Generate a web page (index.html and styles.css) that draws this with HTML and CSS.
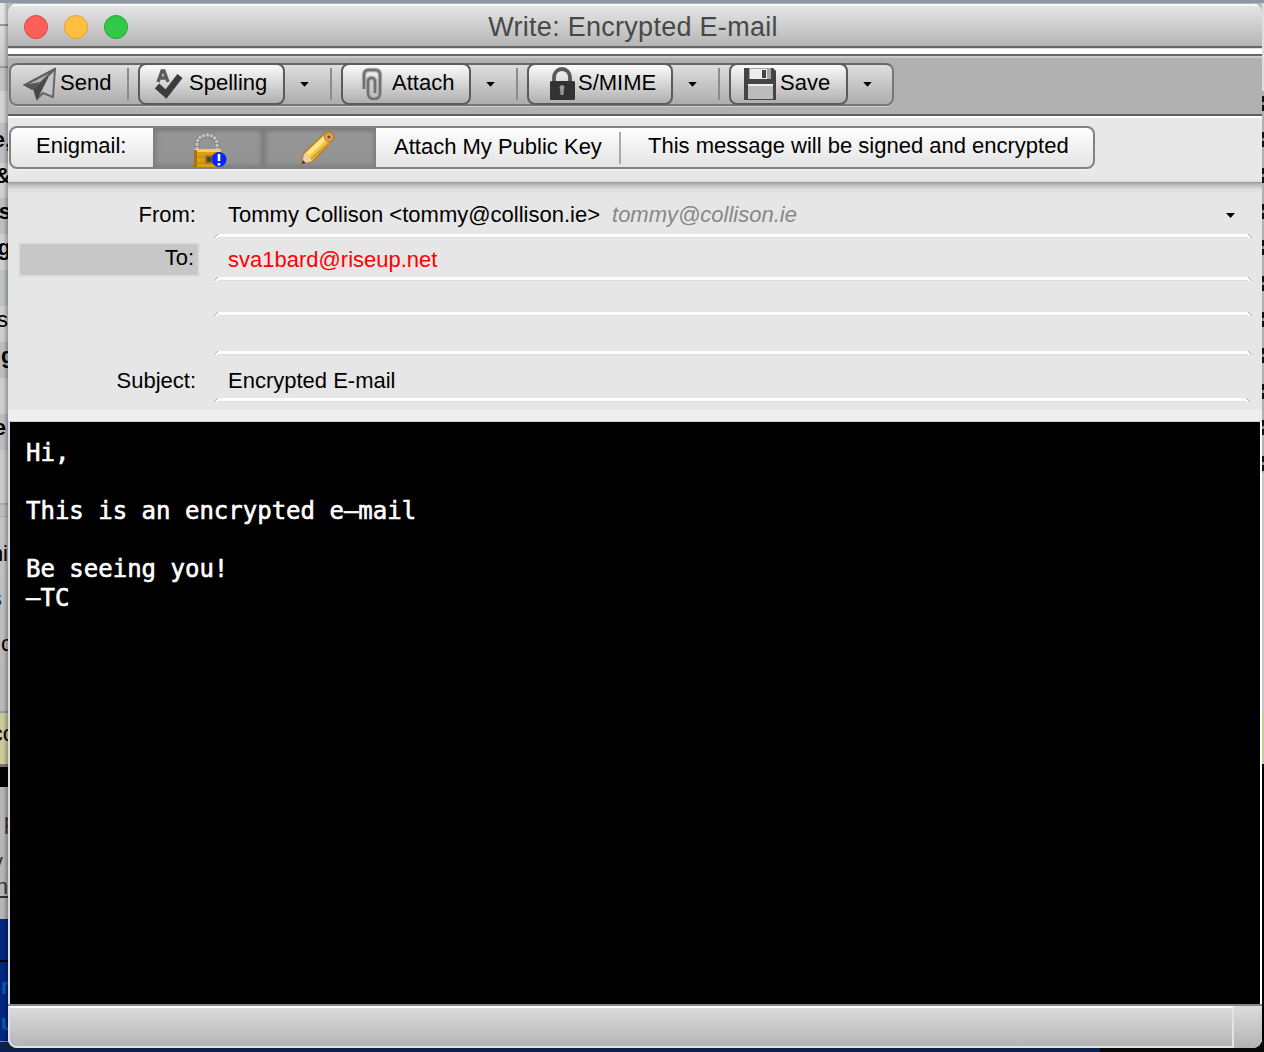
FILE: index.html
```html
<!DOCTYPE html>
<html lang="en">
<head>
<meta charset="utf-8">
<title>Write: Encrypted E-mail</title>
<link rel="stylesheet" href="styles.css">
</head>
<body>
<div class="desktop">
  <div class="behind-left" aria-hidden="true">
    <span class="b" style="top:127px">e,</span>
    <span class="b" style="top:163px">&amp;</span>
    <span class="b" style="top:199px">s</span>
    <span class="b" style="top:235px">g</span>
    <span style="top:307px">s</span>
    <span class="b cut" style="top:343px">g</span>
    <span class="b" style="top:415px">e</span>
    <span style="top:541px">ni</span>
    <span class="link" style="top:586px">s</span>
    <span class="cut" style="top:631px">c</span>
    <span class="co" style="top:721px">co</span>
    <span class="dim p" style="top:809px">p</span>
    <span class="dim y" style="top:849px">y</span>
    <span class="dim" style="top:874px"><u>n</u></span>
    <span class="blue cut" style="top:974px">r</span>
    <span class="blue cut" style="top:1010px">u</span>
  </div>
  <div class="behind-right"></div>
  <div class="behind-bottom"></div>

  <main class="window">
    <header class="titlebar">
      <div class="lights"><i class="red"></i><i class="yellow"></i><i class="green"></i></div>
      <h1>Write: Encrypted E-mail</h1>
    </header>

    <nav class="toolbar">
      <div class="group">
        <div class="send">
          <svg width="34" height="34" viewBox="0 0 34 34"><path d="M2 18 32 2 30 30 20 26 14 32 11 22Z" fill="#c4c4c4" stroke="#666" stroke-width="2"/><path d="M2 18 32 2 11 22Z" fill="#b5b5b5" stroke="#606060" stroke-width="2"/><path d="M1 18 17 15 9 23Z" fill="#555"/><path d="M11 22 25 10 18 24 14 32Z" fill="#484848" stroke="#484848"/></svg>
          <span>Send</span>
        </div>
        <i class="sep"></i>
        <button class="btn spelling">
          <svg width="30" height="34" viewBox="0 0 30 34"><path d="M4 15 8 4h2l4 11M6 11h6" fill="none" stroke="#5c5c5c" stroke-width="3.4"/><path d="M3 19 12 27 26 9" fill="none" stroke="#3c3c3c" stroke-width="6.5"/></svg>
          <span>Spelling</span>
        </button>
        <div class="more"><i class="caret"></i></div>
        <i class="sep"></i>
        <button class="btn attach">
          <svg width="24" height="34" viewBox="0 0 24 34"><path d="M3 22V8Q3 3 8 3h6q5 0 5 5v18q0 6-6 6t-6-6V15q0-4 3.500-4t3.500 4v11" fill="none" stroke="#aaa" stroke-width="4.4"/><path d="M3 22V8Q3 3 8 3h6q5 0 5 5v18q0 6-6 6t-6-6V15q0-4 3.500-4t3.500 4v11" fill="none" stroke="#707070" stroke-width="2.2"/></svg>
          <span>Attach</span>
        </button>
        <div class="more"><i class="caret"></i></div>
        <i class="sep"></i>
        <button class="btn smime">
          <svg width="28" height="34" viewBox="0 0 28 34"><path d="M6 17V11C6 -1 22 -1 22 11v6" fill="none" stroke="#5a5a5a" stroke-width="3.8"/><rect x="2" y="14" width="25" height="19" rx="1.5" fill="#333"/><path d="M12 22a2.500 2.500 0 1 1 4 0l-.6 6h-2.800Z" fill="#999"/></svg>
          <span>S/MIME</span>
        </button>
        <div class="more"><i class="caret"></i></div>
        <i class="sep"></i>
        <button class="btn save">
          <svg width="34" height="34" viewBox="0 0 34 34"><path d="M1 1h29l3 3v29H1Z" fill="#444"/><path d="M6 1h22v11H6Z" fill="#a5a5a5"/><path d="M7 2h17v10H7Z" fill="#eee"/><path d="M19 3h4v8h-4Z" fill="#444"/><path d="M5 17h25v15H5Z" fill="#bcbcbc"/><path d="M5 17h25v2H5Z" fill="#eee"/></svg>
          <span>Save</span>
        </button>
        <div class="more"><i class="caret"></i></div>
      </div>
    </nav>

    <nav class="enigbar">
      <div class="group light">
        <div class="label">Enigmail:</div>
        <button class="pressed lock">
          <svg width="40" height="38" viewBox="0 0 40 38"><path d="M9 20V14C9 2 29 2 29 14v6" fill="none" stroke="#858585" stroke-width="5"/><path d="M9 20V14C9 2 29 2 29 14v6" fill="none" stroke="#c4c4c4" stroke-width="3" stroke-dasharray="3 1"/><path d="M6 19h27v19H6Z" fill="#d9a014"/><path d="M6 19h27v3H6Z" fill="#f5cf4f"/><path d="M6 27h27M6 33h27" stroke="#b98312" stroke-width="1"/><path d="M6 20h3v18H6Z" fill="#a9740b"/><path d="M17 25h8v9h-8Z" fill="#9b762a"/><path d="M19 27h4v5h-4Z" fill="#554019"/><circle cx="31" cy="29.500" r="7.500" fill="#0a24ff"/><path d="M31 24v7M31 33v2.500" stroke="#fff" stroke-width="2.600"/></svg>
        </button>
        <button class="pressed pencil">
          <svg width="36" height="36" viewBox="0 0 36 36"><path d="M2 34 4 23 24 4Q28 0 32 3Q36 7 32 11L13 31Z" fill="#f2c744" stroke="#b67a1e" stroke-width="1.2"/><path d="M6 23 25 5l3 3L9 26Z" fill="#ffe688"/><path d="M11 29 30 12" stroke="#d79a28" stroke-width="2"/><path d="M2 34 4 24 8 25 12 31Z" fill="#efd0a0"/><path d="M2 34 2.500 30 6 33Z" fill="#503010"/><circle cx="29" cy="7" r="4.600" fill="#dda260" stroke="#b77835"/><circle cx="29" cy="7" r="1.600" fill="#70502c"/></svg>
        </button>
        <div class="key">Attach My Public Key</div>
        <i class="sep"></i>
        <div class="status">This message will be signed and encrypted</div>
      </div>
    </nav>

    <section class="fields">
      <div class="row from"><label>From:</label><div class="field"><span>Tommy Collison &lt;tommy@collison.ie&gt;</span><em>tommy@collison.ie</em><i class="caret"></i></div></div>
      <div class="row to"><label>To:</label><div class="field"><span>sva1bard@riseup.net</span></div></div>
      <div class="row empty1"><label></label><div class="field"></div></div>
      <div class="row empty2"><label></label><div class="field"></div></div>
      <div class="row subject"><label>Subject:</label><div class="field"><span>Encrypted E-mail</span></div></div>
    </section>
    <div class="splitter"></div>

    <pre class="editor">Hi,

This is an encrypted e–mail

Be seeing you!
—TC</pre>

    <footer class="statusbar"><div class="panel"></div><div class="grip"></div></footer>
  </main>
</div>
</body>
</html>
```
FILE: styles.css
```css
* { box-sizing: border-box; }
body { margin: 0; background: #000; font: 22px/26px "Liberation Sans", Arial, sans-serif; color: #000; }
i, em { display: block; }
.desktop { position: relative; width: 1264px; height: 1052px; overflow: hidden; background: linear-gradient(#8f97a4 0 3px, #b8b8b8 3px); }

/* Windows showing behind the composer */
.behind-left {
  position: absolute; left: 0; top: 3px; width: 8px; height: 1049px; overflow: hidden;
  background: linear-gradient(#e6e6e6 0, #e0e0e0 21px, #999 21px 23px, #dcdcdc 23px, #c5c5c5 63px, #999 63px 65px, #c2c2c2 65px 88px, #d2d2d2 88px 120px, #bdbfc2 120px 160px, #d0d0d0 160px 195px, #bcbec1 195px 231px, #cfcfcf 231px 267px, #bec0c3 267px 303px, #cecece 303px 339px, #bbbdc1 339px 375px, #cecece 375px 411px, #bbbdc1 411px 447px, #c9c9c9 447px 500px, #aaa 500px 502px, #bdbdbd 502px 513px, #aaa 513px 514px, #c3c3c3 514px, #b7b7b7 708px, #999 708px 710px, #cbca97 710px 761px, #777 761px 764px, #000 764px 784px, #b5b5b5 784px 916px, #00277d 916px 957px, #000 957px 959px, #00277d 959px 1038px, #888 1038px 1040px, #062152 1040px);
}
.behind-left span { position: absolute; right: 0; margin-top: -3px; white-space: nowrap; }
.behind-left .cut { right: auto; left: 1px; }
.behind-left .co { right: -7px; }
.behind-left .p { right: auto; left: 4px; }
.behind-left .y { right: 5px; }
.behind-left .b { font-weight: bold; }
.behind-left .b:first-child { right: -3px; }
.behind-left .b:nth-child(2), .behind-left .b:nth-child(3), .behind-left .b:nth-child(4) { right: -3px; }
.behind-left .b:nth-child(7) { right: 2px; }
.behind-left .link { color: #0c3591; right: 6px; }
.behind-left .dim { color: #333; }
.behind-left .blue { color: #0759b7; font-weight: bold; }
.behind-left::after { content: ""; position: absolute; inset: 0; background: linear-gradient(90deg, transparent 40%, rgba(0,0,0,.28)); }
.behind-right {
  position: absolute; left: 1262px; top: 3px; width: 2px; height: 1049px;
  background: linear-gradient(#ddd 0 88px, transparent 88px 470px, #c4c4c4 470px 710px, #cbca97 710px 761px, #000 761px), repeating-linear-gradient(#aeb0b4 0 21px, #111 21px 27px, #a98761 27px 30px, #111 30px 36px);
}
.behind-bottom { position: absolute; left: 0; top: 1042px; width: 1264px; height: 10px; background: linear-gradient(90deg, #0a214c 0 1100px, #080808 1100px); }

/* Composer window */
.window { position: absolute; left: 8px; top: 3px; width: 1254px; height: 1045px; display: flex; flex-direction: column; border-radius: 10px 10px 9px 9px; overflow: hidden; background: #e7e7e7; }
.titlebar { height: 51px; flex: none; display: grid; grid-template-columns: 1fr auto 1fr; align-items: center; padding: 0 0 4px 16px; border-top: 1px solid #b5b5b5; background: linear-gradient(#f7f7f7 0 2px, #e5e5e5 2px, #b5b5b5 42px, #666 42px 44px, #ddd 44px 45px, #fff 45px); }
.titlebar h1 { margin: 0 0 0 -20px; font-size: 27px; line-height: 30px; font-weight: 400; letter-spacing: .28px; color: #484848; }
.lights { display: flex; gap: 16px; margin-top: -1px; }
.lights i { width: 24px; height: 24px; border-radius: 50%; border: 1px solid; }
.lights .red { background: #ff5f5a; border-color: #e1453f; }
.lights .yellow { background: #ffbf3f; border-color: #dfa032; }
.lights .green { background: #34c849; border-color: #21a532; }

.toolbar { height: 64px; flex: none; padding: 9px 0 0 1px; background: linear-gradient(#666 0 2px, #ccc 2px 4px, #b1b1b1 4px 60px, #5f5f5f 60px 62px, #fff 62px); }
.group { display: flex; align-items: center; width: 884.5px; height: 42.5px; border: 2px solid #777; border-color: #686868 #777 #777; border-radius: 8px; background: linear-gradient(#dedede, #adadad); box-shadow: 0 1px 0 #d0d0d0; }
.sep { width: 2px; height: 32px; flex: none; background: #8b8b8b; }
.send { width: 116px; flex: none; display: flex; align-items: center; padding-left: 12px; }
.send span { margin: -3px 0 0 3px; }
.btn { height: 42px; flex: none; display: flex; align-items: center; margin: 0 0 0 9px; border: 2px solid #5b5b5b; border-radius: 8px; background: linear-gradient(#fbfbfb, #b0b0b0); padding: 0 0 0 14px; font: inherit; color: #000; }
.btn svg, .send svg { flex: none; }
.btn span { margin-top: -3px; white-space: nowrap; }
.spelling { width: 147px; }
.spelling span { margin-left: 5px; }
.attach { width: 130px; padding-left: 18px; }
.attach span { margin-left: 7px; }
.smime { width: 146px; padding-left: 19px; }
.smime span { margin-left: 2px; }
.save { width: 119px; padding-left: 12px; }
.save span { margin-left: 3px; }
.more { width: 45px; flex: none; padding-left: 15px; }
.caret { width: 9px; height: 5px; background: #000; clip-path: polygon(0 0, 100% 0, 50% 100%); }

.enigbar { height: 64px; flex: none; padding: 8px 0 0 1px; background: linear-gradient(#e8e8e8 0 62px, #dedede 62px); }
.light { width: 1086px; height: 43px; background: linear-gradient(#fefefe, #e3e3e3); border-color: #828282; box-shadow: 0 1px 0 #f5f5f5; }
.label { width: 142px; padding-left: 25px; margin-top: -4px; }
.pressed { height: 39px; flex: none; display: flex; justify-content: center; align-items: flex-start; border: 0; padding: 2px 0 0; background: linear-gradient(#818181, #969696 6px, #929292); box-shadow: inset 3px 0 5px #7b7b7b, inset -2px 0 4px #7b7b7b; overflow: hidden; }
.lock { width: 110px; }
.pencil { width: 113px; }
.pencil svg { margin-left: -3px; }
.key { width: 243px; padding-left: 18px; margin-top: -2px; white-space: nowrap; }
.light .sep { background: #aaa; }
.status { padding-left: 27px; margin-top: -4px; white-space: nowrap; }

.fields { height: 228px; flex: none; background: linear-gradient(#989898, #bdbdbd 3px, #dcdcdc 7px, #e6e6e6 11px); }
.row { display: flex; align-items: stretch; padding-left: 12px; }
.row label { width: 178px; margin-right: 16px; text-align: right; }
.row:not(.to) label { width: 179px; margin-right: 15px; }
.field { position: relative; width: 1038px; display: flex; padding-left: 14px; background: linear-gradient(#fff, #fff) 3px 100% / calc(100% - 6px) 3px no-repeat; box-shadow: 0 1px 0 rgba(0,0,0,.03); }
/* Slanted ends of the field underline */
.field::before, .field::after { content: ""; position: absolute; bottom: -1px; width: 4px; height: 4px; }
.field::before { left: 0; background: linear-gradient(135deg, transparent 42%, #aaa 42% 56%, #fff 56%); }
.field::after { right: 0; background: linear-gradient(225deg, transparent 42%, #aaa 42% 56%, #fff 56%); }
.from { height: 55px; }
.from label, .from .field { padding-top: 20px; padding-right: 3px; }
.from em { margin-left: 12px; color: #888; }
.from .caret { margin: 11px 14px 0 auto; }
.to { height: 43px; }
.to label { height: 31px; margin-top: 7px; padding: 1px 4px 0 0; background: #c7c7c7; box-shadow: 0 0 0 2px #dedede; }
.to .field { padding-top: 10px; color: #f00; }
.empty1 { height: 35px; }
.empty2 { height: 39px; }
.subject { height: 47px; }
.subject label { padding: 14px 3px 0 0; }
.subject .field { padding-top: 14px; width: 1036px; }
.splitter { height: 12px; flex: none; background: linear-gradient(#efefef 0 11px, #d0d0d0 11px); }

.editor { height: 582px; flex: none; margin: 0 2px; padding: 17px 16px 0; background: #000; color: #fff; font: 24px/29px "DejaVu Sans Mono", monospace; -webkit-text-stroke: .6px #fff; box-shadow: 2px 0 0 #fff, -2px 0 0 #ddd; }
.statusbar { flex: 1; display: flex; border-top: 2px solid #858585; background: linear-gradient(#dcdcdc, #b3b3b3); position: relative; }
.panel { width: 1226px; border: 2px solid #e3e3e3; border-top-color: #fff; border-radius: 0 0 0 8px; }
.grip { flex: 1; }
```
